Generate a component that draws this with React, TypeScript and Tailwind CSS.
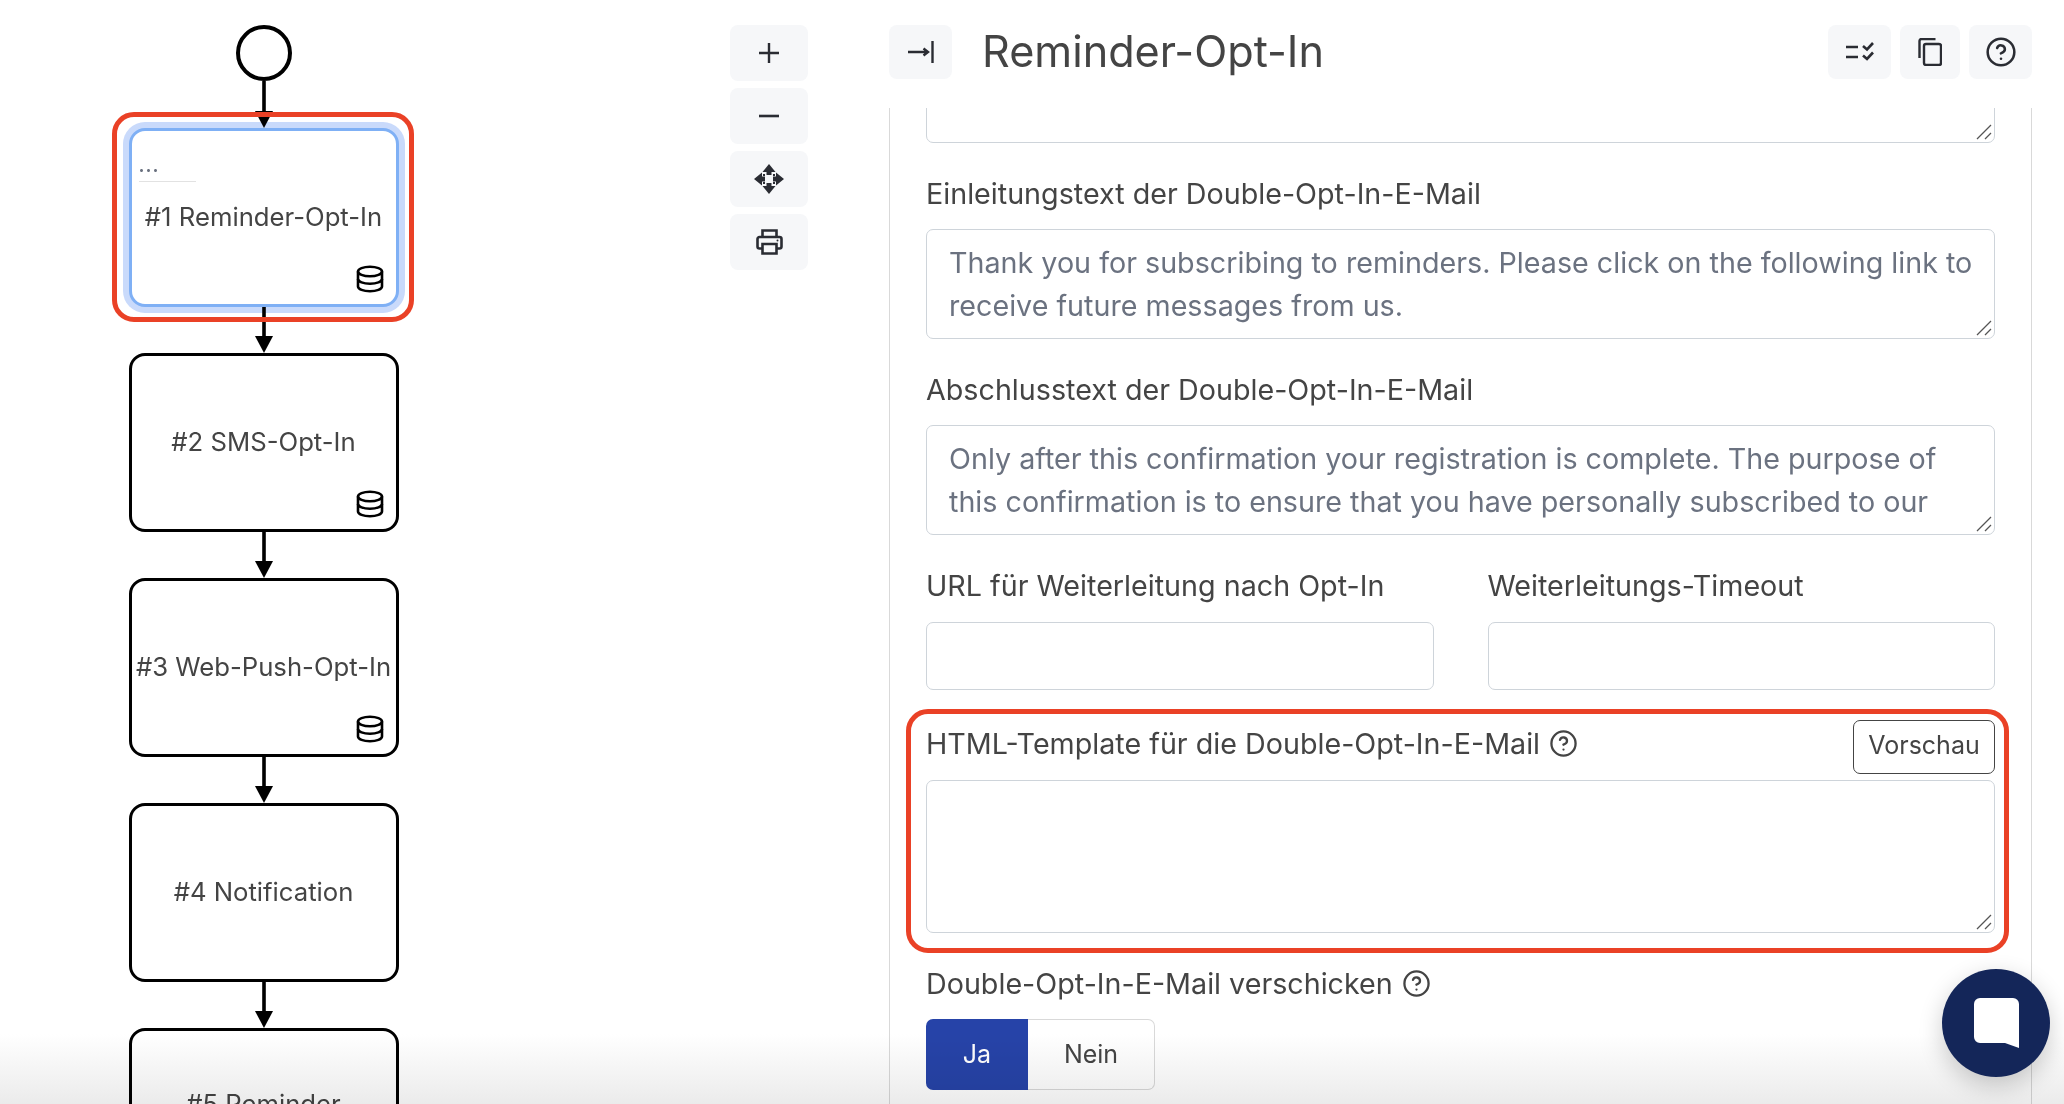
import * as React from 'react';
import { CircleHelp } from 'lucide-react';

const fieldCls =
  'block w-full resize-none rounded-[7px] border border-[#ced4da] bg-white pb-[12px] pl-[22px] pr-[12px] pt-[11px] text-[28.7px] leading-[43px] text-[#444444] placeholder:text-[#6b7280] outline-none overflow-hidden';

const labelCls = 'block text-[28.7px] leading-[39px] whitespace-nowrap';

function DbIcon() {
  return (
    <svg viewBox="0 0 28 28" className="h-[28px] w-[28px]" fill="none" stroke="#000" strokeWidth="2.6">
      <ellipse cx="14" cy="6.5" rx="12" ry="4.8" />
      <path d="M2 6.5v15c0 2.7 5.4 4.8 12 4.8s12-2.1 12-4.8v-15" />
      <path d="M2 14c0 2.7 5.4 4.8 12 4.8s12-2.1 12-4.8" />
    </svg>
  );
}

function Arrow({ height = 46 }: { height?: number }) {
  return (
    <svg width="20" height={height} viewBox={`0 0 20 ${height}`} className="relative z-10 block shrink-0">
      <rect x="8.2" y="0" width="3.6" height={height - 12} fill="#000" />
      <path d={`M1 ${height - 17}H19L10 ${height}Z`} fill="#000" />
    </svg>
  );
}

function FlowNode({
  label,
  db,
  selected,
}: {
  label: string;
  db?: boolean;
  selected?: boolean;
}) {
  return (
    <div
      className={`relative flex h-[179px] w-[270px] shrink-0 items-center justify-center rounded-[16px] border-[3px] bg-white pb-[2px] text-center text-[25.7px] leading-[26px] text-[#444444] ${
        selected
          ? 'border-[#7fb0f5] shadow-[0_0_0_6px_#c9dafb]'
          : 'border-black'
      }`}
    >
      {selected && (
        <div className="absolute left-[7px] top-[25px] w-[57px] border-b border-[#e2e2e2] pb-[5px] text-left text-[18px] font-bold leading-[20px] tracking-[1px] text-[#6b7280]">
          ...
        </div>
      )}
      <span className="whitespace-pre-line">{label}</span>
      {db && (
        <div className="absolute bottom-[11px] right-[12px]">
          <DbIcon />
        </div>
      )}
    </div>
  );
}

function ToolButton({
  children,
  className,
}: {
  children: React.ReactNode;
  className: string;
}) {
  return (
    <button className={`flex items-center justify-center rounded-[8px] bg-[#f6f7f9] text-[#2a2c33] ${className}`}>
      {children}
    </button>
  );
}

function Grip() {
  return (
    <svg width="16" height="16" viewBox="0 0 16 16" className="pointer-events-none absolute bottom-[3px] right-[3px]" stroke="#555" strokeWidth="1.3">
      <path d="M1 15L15 1M9 15l6-6" />
    </svg>
  );
}

function Area({ className }: { className: string }) {
  return <textarea readOnly className={`${fieldCls} ${className}`} />;
}

function Field({
  label,
  placeholder,
  className,
}: {
  label: string;
  placeholder: string;
  className?: string;
}) {
  return (
    <div className={className}>
      <label className={`${labelCls} mb-[16px]`}>{label}</label>
      <div className="relative">
        <textarea readOnly rows={2} placeholder={placeholder} className={`${fieldCls} h-[110px]`} />
        <Grip />
      </div>
    </div>
  );
}

export default function App() {
  return (
    <div
      className="relative flex h-screen w-full overflow-hidden bg-white text-[#444444]"
      style={{ fontFamily: 'Inter, "Liberation Sans", sans-serif' }}
    >
      {/* flow diagram */}
      <div className="flex w-[527px] shrink-0 flex-col items-center pt-[25px]">
        <div className="h-[56px] w-[56px] shrink-0 rounded-full border-[4px] border-black bg-white" />
        <Arrow height={47} />
        <div className="relative">
          <FlowNode label="#1 Reminder-Opt-In" db selected />
          <div className="pointer-events-none absolute -bottom-[15px] -left-[17px] -right-[15px] -top-[16px] z-20 rounded-[22px] border-[5px] border-[#ea4126]" />
        </div>
        <Arrow />
        <FlowNode label="#2 SMS-Opt-In" db />
        <Arrow />
        <FlowNode label="#3 Web-Push-Opt-In" db />
        <Arrow />
        <FlowNode label="#4 Notification" />
        <Arrow />
        <FlowNode label={'#5 Reminder\nE-Mail'} />
      </div>

      {/* zoom controls */}
      <div className="ml-[203px] flex w-[78px] shrink-0 flex-col gap-[7px] pt-[25px]">
        <ToolButton className="h-[56px] w-[78px]">
          <svg width="20" height="20" viewBox="0 0 20 20" stroke="currentColor" strokeWidth="2.4">
            <path d="M0 10h20M10 0v20" />
          </svg>
        </ToolButton>
        <ToolButton className="h-[56px] w-[78px]">
          <svg width="20" height="4" viewBox="0 0 20 4" stroke="currentColor" strokeWidth="2.6">
            <path d="M0 2h20" />
          </svg>
        </ToolButton>
        <ToolButton className="h-[56px] w-[78px]">
          <svg width="30" height="30" viewBox="0 0 30 30" fill="currentColor">
            <path d="M15 0l6.5 8H17.5v3h-5V8H8.5zM15 30l-6.5-8h4v-3h5v3h4zM0 15l8-6.5v4h3v5H8v4zM30 15l-8 6.5v-4h-3v-5h3v-4z" />
            <path d="M9 10h2v2H9zM19 10h2v2h-2zM9 18h2v2H9zM19 18h2v2h-2z" />
          </svg>
        </ToolButton>
        <ToolButton className="h-[56px] w-[78px]">
          <svg width="27" height="26" viewBox="0 0 27 26" fill="none" stroke="currentColor" strokeWidth="2.6">
            <path d="M6.5 8V1.5h14V8" />
            <path d="M6 19.5H3.5a2 2 0 0 1-2-2V10a2 2 0 0 1 2-2h20a2 2 0 0 1 2 2v7.5a2 2 0 0 1-2 2H21" />
            <path d="M6.5 15h14v9.5h-14z" />
            <circle cx="21.5" cy="11.5" r="1" fill="currentColor" stroke="none" />
          </svg>
        </ToolButton>
      </div>

      {/* settings panel */}
      <div className="ml-[81px] flex w-[1143px] shrink-0 flex-col pt-[25px]">
        <div className="flex h-[54px] shrink-0 items-center">
          <ToolButton className="h-[54px] w-[63px]">
            <svg width="26" height="22" viewBox="0 0 26 22" fill="none" stroke="currentColor" strokeWidth="2.4">
              <path d="M0 11h20M15.5 7.5l4.5 3.5-4.5 3.5" />
              <path d="M24.5 0v22" />
            </svg>
          </ToolButton>
          <h1 className="ml-[30px] pb-[2px] text-[43.2px] font-normal leading-[52px]">Reminder-Opt-In</h1>
          <div className="ml-auto flex gap-[9px]">
            <ToolButton className="h-[54px] w-[63px]">
              <svg width="28" height="20" viewBox="0 0 28 20" fill="none" stroke="currentColor" strokeWidth="2.6">
                <path d="M0 5h12M0 15h12" />
                <path d="M17 4l4 3.5L27 1M17 13.5l4 3.5 6-6.5" />
              </svg>
            </ToolButton>
            <ToolButton className="h-[54px] w-[60px]">
              <svg width="24" height="28" viewBox="0 0 24 28" fill="none" stroke="currentColor" strokeWidth="2.4">
                <path d="M1.5 20V3a2 2 0 0 1 2-2h14" />
                <rect x="6" y="6" width="17" height="21" rx="2" />
              </svg>
            </ToolButton>
            <ToolButton className="h-[54px] w-[63px]">
              <CircleHelp size={32} strokeWidth={1.9} />
            </ToolButton>
          </div>
        </div>

        <div className="mt-[29px] min-h-0 flex-1 overflow-hidden border-x border-[#d9d9d9] px-[36px]">
          <div className="relative -mt-[45px]">
            <Area className="h-[80px]" />
            <Grip />
          </div>

          <Field
            className="mt-[31px]"
            label="Einleitungstext der Double-Opt-In-E-Mail"
            placeholder="Thank you for subscribing to reminders. Please click on the following link to receive future messages from us."
          />
          <Field
            className="mt-[31px]"
            label="Abschlusstext der Double-Opt-In-E-Mail"
            placeholder="Only after this confirmation your registration is complete. The purpose of this confirmation is to ensure that you have personally subscribed to our newsletter."
          />

          <div className="mt-[31px] grid grid-cols-2 gap-[54px]">
            <div>
              <label className={`${labelCls} mb-[17px]`}>URL für Weiterleitung nach Opt-In</label>
              <input readOnly className={`${fieldCls} h-[68px]`} />
            </div>
            <div>
              <label className={`${labelCls} mb-[17px]`}>Weiterleitungs-Timeout</label>
              <input readOnly className={`${fieldCls} h-[68px]`} />
            </div>
          </div>

          <div className="relative mt-[30px]">
            <div className="mb-[6px] flex h-[54px] items-start justify-between">
              <label className="flex items-center gap-[9px] whitespace-nowrap pt-[4px] text-[28.7px] leading-[39px]">
                HTML-Template für die Double-Opt-In-E-Mail
                <CircleHelp size={29} strokeWidth={1.9} />
              </label>
              <button className="h-[54px] w-[142px] rounded-[7px] border border-[#444444] pb-[2px] text-[25px]">Vorschau</button>
            </div>
            <div className="relative">
              <Area className="h-[153px]" />
              <Grip />
            </div>
            <div className="pointer-events-none absolute -bottom-[20px] -left-[20px] -right-[14px] -top-[11px] rounded-[22px] border-[5px] border-[#ea4126]" />
          </div>

          <label className="mb-[16px] mt-[31px] flex items-center gap-[9px] whitespace-nowrap text-[28.7px] leading-[39px]">
            Double-Opt-In-E-Mail verschicken
            <CircleHelp size={29} strokeWidth={1.9} />
          </label>
          <div className="flex h-[71px] w-[229px] text-[25px]">
            <button className="w-[102px] rounded-l-[7px] bg-[#2643a8] text-white">Ja</button>
            <button className="flex-1 rounded-r-[7px] border border-l-0 border-[#d9d9d9]">Nein</button>
          </div>
        </div>
      </div>

      {/* page fade at the bottom edge */}
      <div className="pointer-events-none absolute inset-x-0 bottom-0 z-30 h-[70px] bg-gradient-to-b from-white to-[#ebebeb] mix-blend-multiply" />

      <button className="absolute left-[1942px] top-[969px] z-40 flex h-[108px] w-[108px] items-center justify-center rounded-full bg-[#142659] shadow-[0_8px_24px_rgba(0,0,0,0.2)]">
        <svg width="45" height="50" viewBox="0 0 45 50" fill="#fff">
          <path d="M6 0h33a6 6 0 0 1 6 6v44l-14-5H6a6 6 0 0 1-6-6V6a6 6 0 0 1 6-6z" />
        </svg>
      </button>
    </div>
  );
}
